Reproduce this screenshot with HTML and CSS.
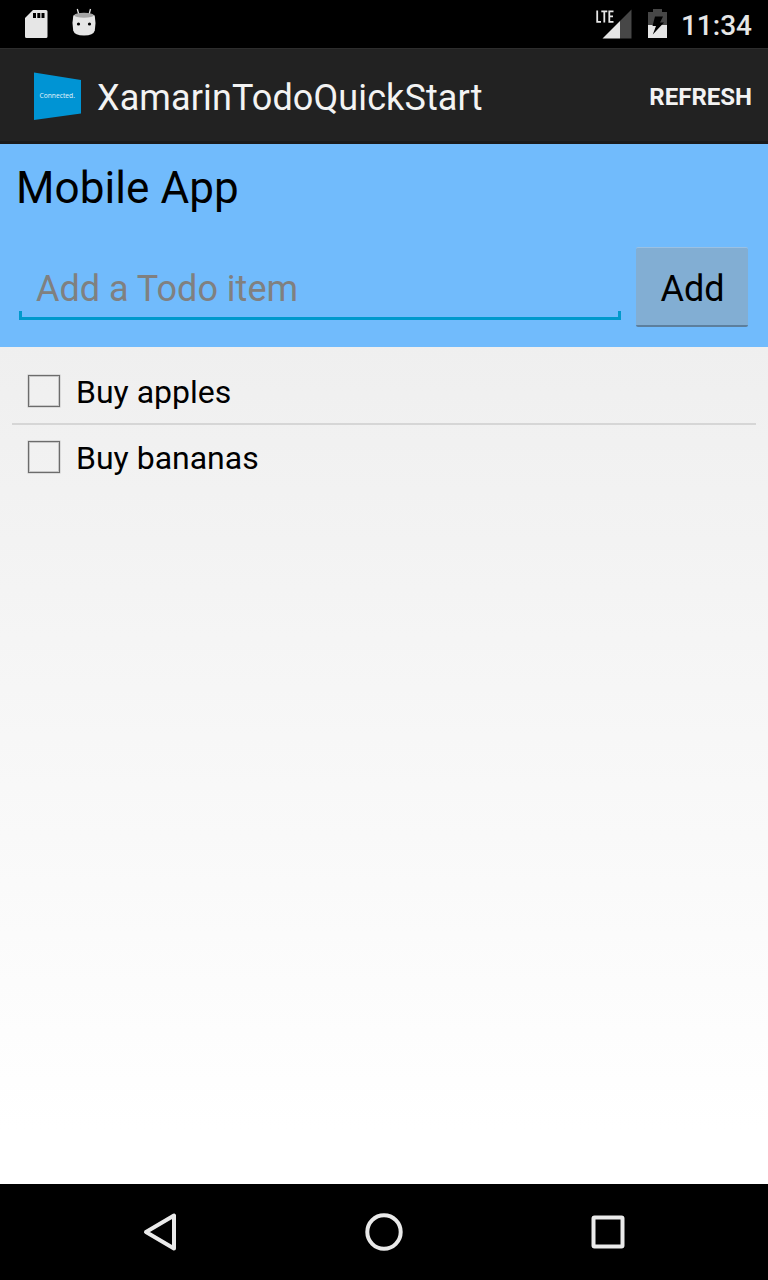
FILE: index.html
```html
<!DOCTYPE html>
<html lang="en">
<head>
<meta charset="utf-8">
<title>XamarinTodoQuickStart</title>
<link rel="stylesheet" href="styles.css">
</head>
<body>
<header class="status-bar">
  <svg class="status-left" width="80" height="40" viewBox="20 4 80 40">
    <path fill="#e6e6e6" fill-rule="evenodd" d="M33 10H46Q47.5 10 47.5 11.500V36.500Q47.500 38 46 38H26.500Q25 38 25 36.500V18ZM33 13V18H36V13ZM37.300 13V18H40.300V13ZM41.500 13V18H44.500V13Z"/>
    <path stroke="#e6e6e6" stroke-width="1.300" fill="none" d="M77.300 9L78.700 14M90.500 9L89.200 14"/>
    <path fill="#e6e6e6" d="M73.300 15.500Q84 11 94.700 15.500Q96.300 23 94.800 30.500Q93.500 35.500 84 35.500Q74.500 35.500 73.200 30.500Q71.700 23 73.300 15.500Z"/>
    <ellipse cx="84" cy="15.300" rx="9.800" ry="2.500" fill="#a5a5a5"/>
    <circle cx="78.500" cy="24" r="1.600"/><circle cx="89.500" cy="24" r="1.600"/>
  </svg>
  <div class="status-right">
    <svg width="76" height="40" viewBox="594 4 76 40">
      <path fill="#474747" d="M631.500 9.500V38.500H620V21Z"/>
      <path fill="#e6e6e6" d="M620 21V38.500H602.500Z"/>
      <path fill="none" stroke="#e6e6e6" stroke-width="1.800" d="M597.200 10.500V21.800H601M601.300 11.400H607.300M604.300 11.400V22.500M613.500 11.400H609.300V21.800H613.500M609.300 16.300H613"/>
      <path fill="#474747" d="M653 9H662V12H667V25H648V12H653Z"/>
      <path fill="#e6e6e6" d="M648 25H667V38H648Z"/>
      <path fill="#000" d="M655 16.500H663L660 22.500H664L652.800 34.500L656 26H652.500Z"/>
    </svg>
    <span class="clock">11:34</span>
  </div>
</header>
<div class="action-bar">
  <svg class="app-icon" width="48" height="50" viewBox="0 0 48 50">
    <path fill="#0094d4" d="M0 1.500L47 9V42.500L0 49Z"/>
    <text class="icon-text" x="5.500" y="27" textLength="35.500" lengthAdjust="spacingAndGlyphs">Connected.</text>
  </svg>
  <h1 class="title">XamarinTodoQuickStart</h1>
  <button class="refresh">REFRESH</button>
</div>
<section class="composer">
  <h2 class="heading">Mobile App</h2>
  <div class="entry-row">
    <div class="field"><input class="entry" type="text" placeholder="Add a Todo item"></div>
    <button class="add">Add</button>
  </div>
</section>
<main class="list">
  <label class="item"><input class="check" type="checkbox"><span>Buy apples</span></label>
  <label class="item"><input class="check" type="checkbox"><span>Buy bananas</span></label>
</main>
<nav class="nav-bar">
  <svg width="36" height="40" viewBox="0 0 36 40"><path class="nav-stroke" stroke-linejoin="round" d="M32 3.500V36.500L4 20Z"/></svg>
  <svg width="40" height="40" viewBox="0 0 40 40"><circle class="nav-stroke" cx="20" cy="20" r="16.700"/></svg>
  <svg width="36" height="40" viewBox="0 0 36 40"><rect class="nav-stroke" x="3.500" y="5.500" width="29" height="29" rx="1"/></svg>
</nav>
</body>
</html>
```
FILE: styles.css
```css
* { box-sizing: border-box; }
body {
  margin: 0;
  height: 1280px;
  display: flex;
  flex-direction: column;
  overflow: hidden;
  background: linear-gradient(#e8e8e8, #fff 1130px);
  font-family: Roboto, "Liberation Sans", sans-serif;
  color: #000;
}
h1, h2 { margin: 0; font-weight: 400; }
button, input { margin: 0; padding: 0; border: 0; background: none; font: inherit; color: inherit; outline: 0; }
svg { display: block; flex: none; }
.status-bar {
  height: 48px;
  padding: 4px 16px 4px 20px;
  display: flex;
  justify-content: space-between;
  background: #000;
}
.status-right { display: flex; gap: 11px; }
.clock { font-size: 28px; font-weight: 500; line-height: 43px; color: #e6e6e6; }
.action-bar {
  height: 96px;
  padding: 0 16px 0 34px;
  display: flex;
  align-items: center;
  background: #222;
  border-top: 1px solid #2d2d2d;
  border-bottom: 3px solid #1a1a1a;
}
.app-icon { margin-top: 2px; }
.title { flex: 1; margin-left: 15px; padding-top: 5px; font-size: 36px; line-height: 42px; letter-spacing: 0.11px; color: #f3f3f3; }
.icon-text { font: 7px "Open Sans", sans-serif; fill: #e4f4fb; }
.refresh { padding-top: 3px; font-size: 24px; line-height: 28px; font-weight: 700; color: #f3f3f3; }
.composer { height: 203px; padding: 16px 20px 20px 16px; background: #71bbfc; }
.heading { font-size: 44px; line-height: 56px; letter-spacing: 0.08px; }
.entry-row { display: flex; margin-top: 31px; gap: 15px; padding-left: 3px; }
.field { position: relative; flex: 1; height: 73px; }
.field::after {
  content: "";
  position: absolute;
  inset: auto 0 0 0;
  height: 6px;
  border: 3px solid #0099cc;
  border-top: 0;
}
.entry { display: block; width: 100%; height: 42px; margin-top: 21px; padding-left: 17px; font-size: 36px; line-height: 42px; }
.entry::placeholder { color: #808080; opacity: 1; }
.add {
  width: 112px;
  height: 80px;
  padding: 4px 0 0 1px;
  font-size: 36px;
  line-height: 42px;
  background: #82aed3;
  border-top: 1px solid #9bc1e3;
  border-bottom: 2px solid #5c7f9d;
  border-radius: 2px;
}
.list { flex: 1; padding: 12px; }
.item { display: flex; align-items: center; height: 64px; padding-left: 16px; gap: 16px; font-size: 32px; line-height: 38px; }
.item span { padding-top: 2px; }
.item + .item { height: 66px; border-top: 2px solid #d6d6d6; }
.check { appearance: none; width: 32px; height: 32px; border: 1px solid #6c6c6c; box-shadow: 0 0 0 0.500px #c4c4c4, inset 0 0 0 1px #c8c8c8; }
.nav-bar { height: 96px; padding: 0 142px; display: flex; align-items: center; justify-content: space-between; background: #000; }
.nav-stroke { fill: none; stroke: #eaeaea; stroke-width: 4; }
```
